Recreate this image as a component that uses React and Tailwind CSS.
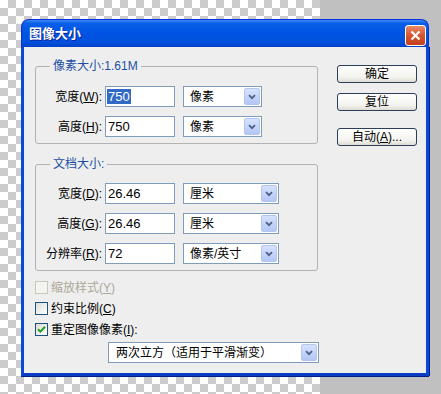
import React from 'react';

const U = ({ children }) => <span className="underline">{children}</span>;

function Arrow() {
  return (
    <div className="mr-px ml-auto flex h-[17px] w-[16px] items-center justify-center rounded-[2px] border border-[#b4c6ee] bg-[linear-gradient(180deg,#d6e1fd,#b3c7f6)]">
      <svg width="8" height="6" viewBox="0 0 8 6">
        <path d="M1 1.2 L4 4.2 L7 1.2" stroke="#4d6185" strokeWidth="1.8" fill="none" />
      </svg>
    </div>
  );
}

function Select({ w, text, pl = 'pl-[6px]' }) {
  return (
    <div className={`flex h-[21px] items-center border border-[#7f9db9] bg-white ${w}`}>
      <span className={`text-[12px] leading-none text-black ${pl}`}>{text}</span>
      <Arrow />
    </div>
  );
}

function Field({ label, value, unit, selW, selected }) {
  return (
    <div className="flex h-[21px] items-center">
      <div className="w-[66px] text-right text-[12px] text-black">{label}</div>
      <div className="ml-[3px] flex h-[21px] w-[70px] items-center border border-[#7f9db9] bg-white pl-px text-[13px] text-black">
        {selected ? <span className="bg-[#316ac5] px-px leading-[15px] text-white">{value}</span> : <span className="px-px">{value}</span>}
      </div>
      <div className="ml-[8px]">
        <Select w={selW} text={unit} />
      </div>
    </div>
  );
}

function Group({ title, children, mt }) {
  return (
    <fieldset className={`w-[283px] rounded-[3px] border border-[#b2b2b2] pb-[6px] ${mt}`}>
      <legend className="ml-[14px] px-[3px] text-[12px] leading-[16px] text-[#1d4ea3]">{title}</legend>
      {children}
    </fieldset>
  );
}

function Check({ state, children }) {
  const disabled = state === 'disabled';
  return (
    <div className="flex h-[21px] items-center">
      <div
        className={`flex h-[13px] w-[13px] items-center justify-center border ${
          disabled ? 'border-[#cac8bb] bg-[#f4f4f0]' : 'border-[#1c5180] bg-[linear-gradient(135deg,#dcdcd7,#ffffff)]'
        }`}
      >
        {state === 'checked' && (
          <svg width="9" height="9" viewBox="0 0 9 9">
            <path d="M1 4.2 L3.4 6.6 L8 1.8" stroke="#21a121" strokeWidth="2" fill="none" />
          </svg>
        )}
      </div>
      <span className={`ml-[3px] text-[12px] ${disabled ? 'text-[#aca899]' : 'text-black'}`}>{children}</span>
    </div>
  );
}

function Button({ children, mt }) {
  return (
    <div
      className={`flex h-[18px] w-[80px] items-center justify-center rounded-[3px] border border-[#2c3e5a] bg-[linear-gradient(180deg,#ffffff,#f3f3ef_70%,#dedcd3)] text-[12px] text-black ${mt}`}
    >
      {children}
    </div>
  );
}

export default function App() {
  return (
    <div className="relative h-[394px] w-[441px] overflow-hidden font-[family-name:Liberation_Sans,Noto_Sans_CJK_SC,sans-serif]">
      <div className="flex h-full">
        <div className="h-full w-[320px] bg-[conic-gradient(#cccccc_25%,#ffffff_0_50%,#cccccc_0_75%,#ffffff_0)] bg-[length:16px_16px]" />
        <div className="h-full flex-1 bg-[#c0c0c0]" />
      </div>

      <div className="absolute top-[19px] left-[21px] flex h-[357px] w-[408px] flex-col">
        <div className="flex h-[28px] items-center justify-between rounded-t-[8px] border border-b-0 border-[#0831d9] bg-[linear-gradient(180deg,#3b8cf5_0%,#0a5fe8_12%,#0054e3_45%,#0052de_80%,#0141c9_100%)] pr-[2px] pl-[7px]">
          <span className="text-[13px] font-bold text-white [text-shadow:1px_1px_0_#0a1e8c]">图像大小</span>
          <div className="mt-[3px] flex h-[21px] w-[21px] items-center justify-center rounded-[3px] border border-white bg-[linear-gradient(180deg,#e88a6a,#d8552e_50%,#c2401c)]">
            <svg width="11" height="11" viewBox="0 0 11 11">
              <path d="M1.5 1.5 L9.5 9.5 M9.5 1.5 L1.5 9.5" stroke="white" strokeWidth="2.2" />
            </svg>
          </div>
        </div>

        <div className="flex flex-1 border-x-[3px] border-b-[3px] border-x-[#0b47d9] border-b-[#0a3cc4] bg-[#eeeeee] shadow-[1px_0_0_#001e8c,0_1px_0_#001e8c]">
          <div className="flex flex-col pl-[11px]">
            <Group title="像素大小:1.61M" mt="mt-[11px]">
              <div className="flex flex-col gap-[9px] pt-[12px]">
                <Field label={<>宽度(<U>W</U>):</>} value="750" unit="像素" selW="w-[79px]" selected />
                <Field label={<>高度(<U>H</U>):</>} value="750" unit="像素" selW="w-[79px]" />
              </div>
            </Group>

            <Group title="文档大小:" mt="mt-[12px]">
              <div className="flex flex-col gap-[9px] pt-[11px]">
                <Field label={<>宽度(<U>D</U>):</>} value="26.46" unit="厘米" selW="w-[96px]" />
                <Field label={<>高度(<U>G</U>):</>} value="26.46" unit="厘米" selW="w-[96px]" />
                <Field label={<>分辨率(<U>R</U>):</>} value="72" unit="像素/英寸" selW="w-[96px]" />
              </div>
            </Group>

            <div className="mt-[6px] flex flex-col">
              <Check state="disabled">缩放样式(<U>Y</U>)</Check>
              <Check state="off">约束比例(<U>C</U>)</Check>
              <Check state="checked">重定图像像素(<U>I</U>):</Check>
            </div>

            <div className="mt-[2px] ml-[73px]">
              <Select w="w-[211px]" text="两次立方（适用于平滑渐变）" pl="pl-[7px]" />
            </div>
          </div>

          <div className="ml-[18px] flex flex-col">
            <Button mt="mt-[18px]">确定</Button>
            <Button mt="mt-[10px]">复位</Button>
            <Button mt="mt-[17px]">
              自动(<U>A</U>)...
            </Button>
          </div>
        </div>
      </div>
    </div>
  );
}
